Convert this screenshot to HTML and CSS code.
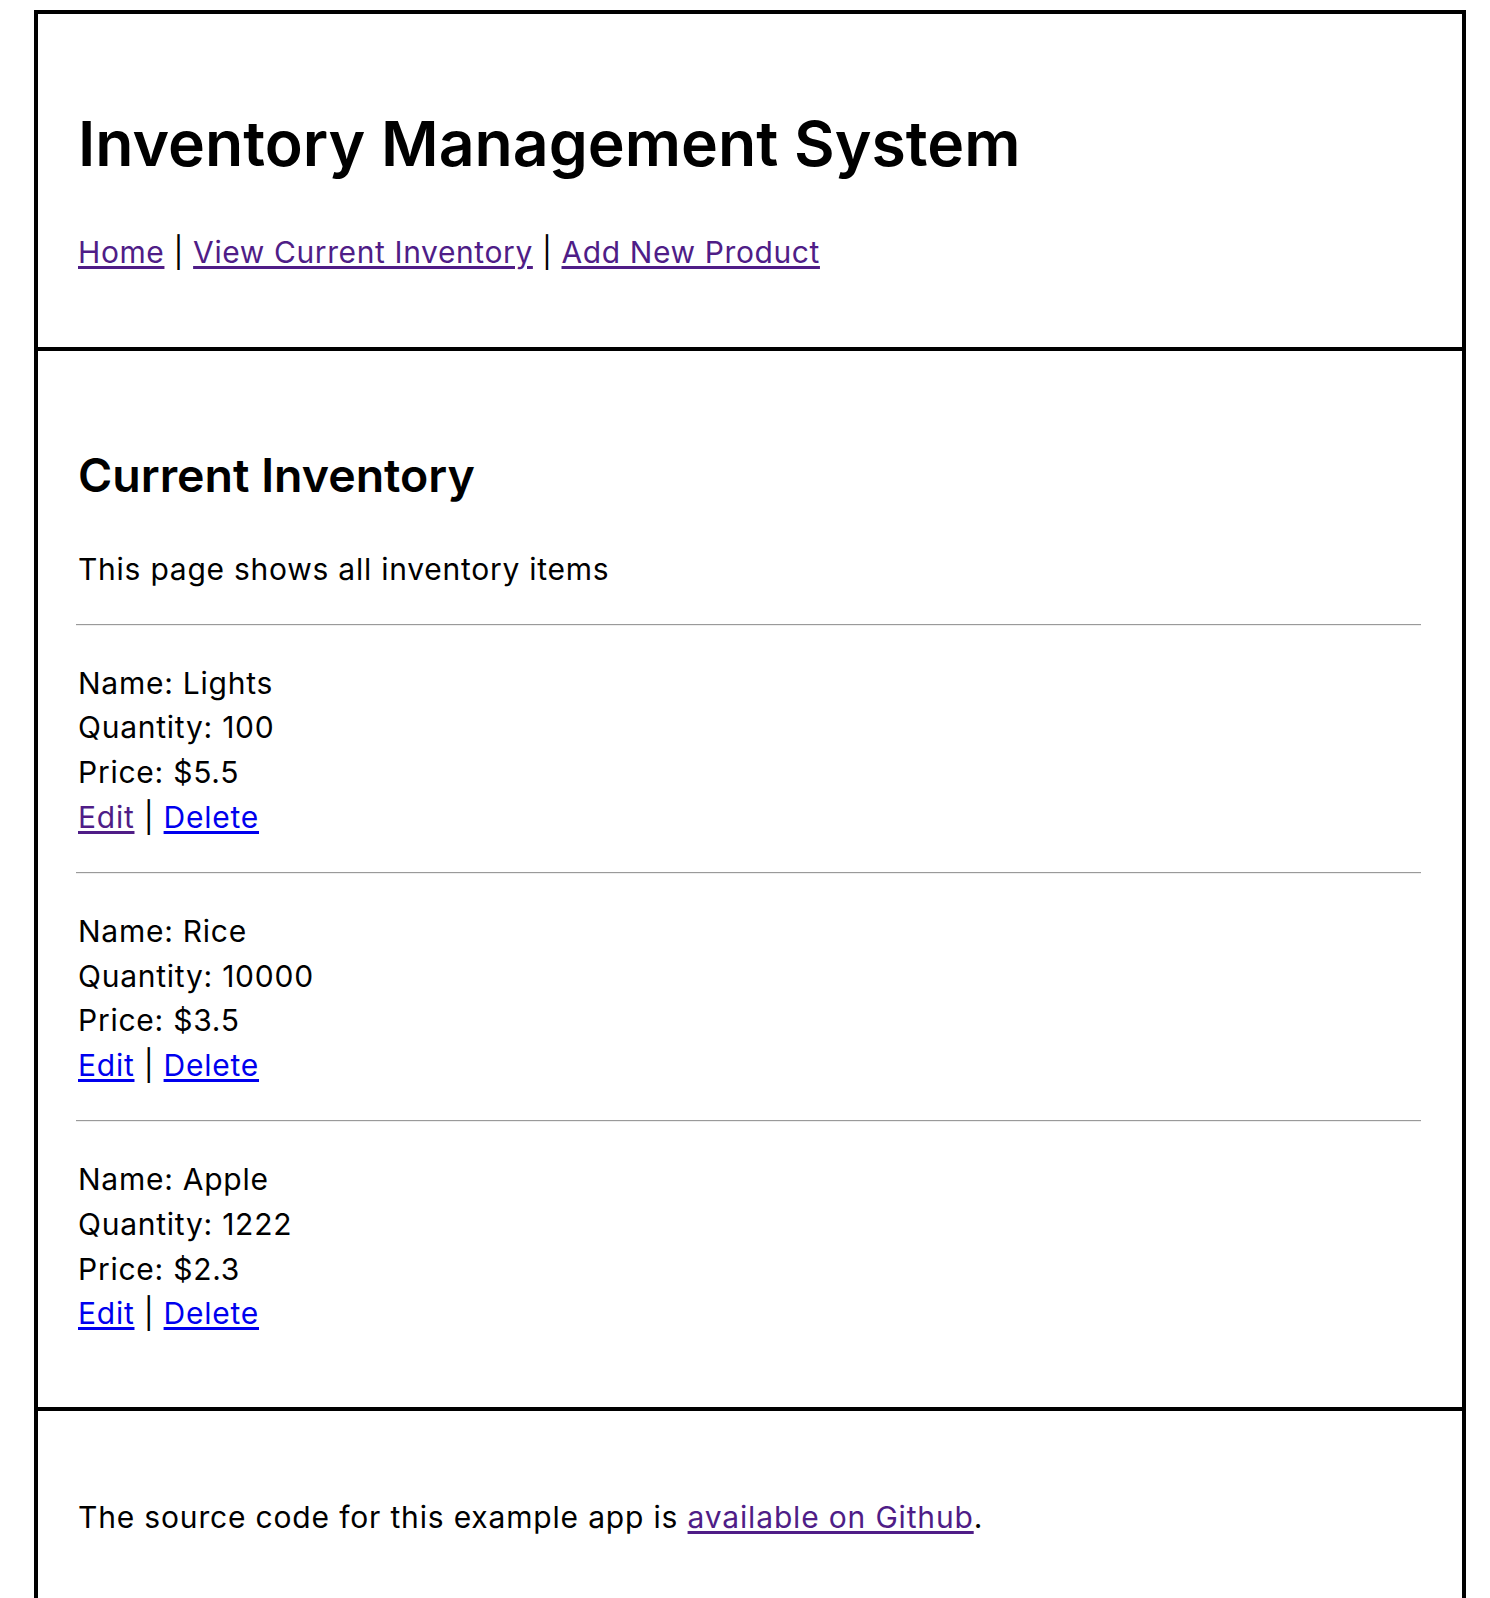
FILE: index.html
```html
<!DOCTYPE html>
<html lang="en">
<head>
<meta charset="utf-8">
<title>Inventory Management System</title>
<link rel="stylesheet" href="styles.css">
</head>
<body>
<div class="frame">
  <header class="site-header">
    <h1 class="title">Inventory Management System</h1>
    <nav class="nav">
      <a class="visited" href="#">Home</a> | <a class="visited" href="#">View Current Inventory</a> | <a class="visited" href="#">Add New Product</a>
    </nav>
  </header>
  <main class="content">
    <h2 class="subtitle">Current Inventory</h2>
    <p class="intro">This page shows all inventory items</p>
    <hr class="rule">
    <div class="item">
      <div>Name: Lights</div>
      <div>Quantity: 100</div>
      <div>Price: $5.5</div>
      <div><a class="visited" href="#">Edit</a> | <a class="link" href="#">Delete</a></div>
    </div>
    <hr class="rule">
    <div class="item">
      <div>Name: Rice</div>
      <div>Quantity: 10000</div>
      <div>Price: $3.5</div>
      <div><a class="link" href="#">Edit</a> | <a class="link" href="#">Delete</a></div>
    </div>
    <hr class="rule">
    <div class="item">
      <div>Name: Apple</div>
      <div>Quantity: 1222</div>
      <div>Price: $2.3</div>
      <div><a class="link" href="#">Edit</a> | <a class="link" href="#">Delete</a></div>
    </div>
  </main>
  <footer class="site-footer">
    <p class="credit">The source code for this example app is <a class="visited" href="#">available on Github</a>.</p>
  </footer>
</div>
</body>
</html>
```

FILE: styles.css
```css
html, body {
  margin: 0;
  padding: 0;
  background: #fff;
}
body {
  font-family: Inter, "Liberation Sans", sans-serif;
  font-size: 30px;
  letter-spacing: 0.75px;
  line-height: 44.8px;
  color: #000;
}
.frame {
  margin: 10px 24px 0 34px;
  border: 4px solid #000;
}
a.visited { color: #4f1d87; text-decoration: underline; }
a.link { color: #0000ee; text-decoration: underline; }
a { text-underline-offset: 3px; text-decoration-thickness: 2px; }

.site-header {
  padding: 92px 41px 72px 40px;
}
.title {
  margin: 0;
  font-size: 62.5px;
  letter-spacing: 0;
  line-height: 74px;
  font-weight: 600;
}
.nav {
  margin-top: 50px;
  letter-spacing: 0.6px;
}

.content {
  border-top: 4px solid #000;
  padding: 96px 41px 39px 40px;
}
.subtitle {
  margin: 0;
  font-size: 46.5px;
  letter-spacing: 0;
  line-height: 56px;
  font-weight: 600;
}
.intro {
  margin: 44px 0 32px;
}
.rule {
  margin: 0 0 0 -2px;
  border: 0;
  border-top: 1px solid #9a9a9a;
  border-bottom: 1px solid #eeeeee;
  height: 0;
}
.item {
  padding: 35px 0 32px;
}

.site-footer {
  border-top: 4px solid #000;
  padding: 84px 41px 83px 40px;
}
.credit {
  margin: 0;
  letter-spacing: 0.83px;
}
```
